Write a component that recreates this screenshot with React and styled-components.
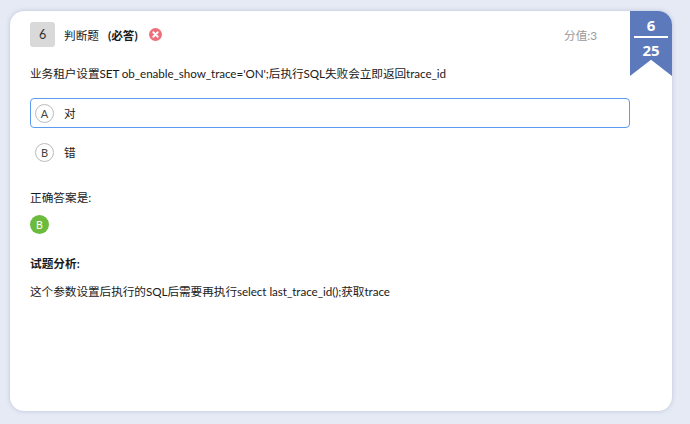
import React from "react";
import styled, { createGlobalStyle } from "styled-components";

const GlobalStyle = createGlobalStyle`
  html, body {
    margin: 0;
    padding: 0;
    background: #e6eaf5;
    font-family: Lato, "Noto Sans CJK SC", sans-serif;
    color: #1a1a1a;
  }
`;

const Page = styled.div`
  box-sizing: border-box;
  width: 690px;
  height: 424px;
  padding: 11px 18px 13px 10px;
`;

const Card = styled.div`
  position: relative;
  box-sizing: border-box;
  height: 400px;
  padding: 10px 42px 0 20px;
  background: #fff;
  border-radius: 14px;
  box-shadow: 0 0 4px rgba(150, 160, 190, 0.55);
  overflow: hidden;
`;

const Header = styled.div`
  display: flex;
  align-items: center;
  height: 26px;
`;

const NumberBox = styled.div`
  display: flex;
  align-items: center;
  justify-content: center;
  width: 25px;
  height: 25px;
  border-radius: 3px;
  background: #d9d9d9;
  font-size: 12.5px;
  color: #333;
`;

const TypeLabel = styled.span`
  margin-left: 9px;
  font-size: 11.67px;
`;

const Required = styled.b`
  margin-left: 9px;
  font-size: 11.67px;
  font-weight: 700;
`;

const WrongIcon = styled.svg`
  margin-left: 11px;
  width: 13px;
  height: 13px;
`;

const Score = styled.span`
  margin-left: auto;
  margin-right: 33px;
  font-size: 11.67px;
  color: #999;
`;

const Question = styled.div`
  margin-top: 17px;
  font-size: 11.67px;
  line-height: 18px;
  letter-spacing: -0.07px;
`;

const Options = styled.div`
  display: flex;
  flex-direction: column;
  gap: 9px;
  margin-top: 16px;
`;

const Option = styled.div`
  display: flex;
  align-items: center;
  box-sizing: border-box;
  height: 30px;
  padding-left: 4px;
  border: 1px solid ${(p) => (p.$active ? "#5b9bf0" : "transparent")};
  border-radius: 4px;
  font-size: 11.67px;
`;

const Letter = styled.span`
  display: flex;
  align-items: center;
  justify-content: center;
  box-sizing: border-box;
  width: 19px;
  height: 19px;
  border: 1px solid #bbb;
  border-radius: 50%;
  font-size: 11px;
  color: #444;
`;

const OptionText = styled.span`
  margin-left: 10px;
  padding-bottom: 2px;
`;

const AnswerLabel = styled.div`
  margin-top: 21px;
  font-size: 11.67px;
  line-height: 18px;
`;

const AnswerBadge = styled.div`
  display: flex;
  align-items: center;
  justify-content: center;
  width: 19px;
  height: 19px;
  margin-top: 9px;
  border-radius: 50%;
  background: #6cbb3c;
  color: #fff;
  font-size: 10.5px;
`;

const AnalysisTitle = styled.div`
  margin-top: 20px;
  font-size: 11.67px;
  line-height: 18px;
  font-weight: 700;
`;

const AnalysisText = styled.div`
  margin-top: 10px;
  font-size: 11.67px;
  line-height: 18px;
  letter-spacing: -0.06px;
`;

const Ribbon = styled.div`
  position: absolute;
  top: 0;
  right: 0;
  box-sizing: border-box;
  width: 42px;
  height: 65px;
  padding-top: 5px;
  background: #5b79bb;
  clip-path: polygon(0 0, 100% 0, 100% 100%, 50% 75%, 0 100%);
  color: #fff;
  font-family: "Open Sans", sans-serif;
  font-size: 15px;
  font-weight: 700;
  text-align: center;
  line-height: 18px;
`;

const RibbonLine = styled.div`
  height: 2px;
  margin: 2px 4px 3px;
  background: #fff;
`;

export default function App() {
  return (
    <Page>
      <GlobalStyle />
      <Card>
        <Header>
          <NumberBox>6</NumberBox>
          <TypeLabel>判断题</TypeLabel>
          <Required>(必答)</Required>
          <WrongIcon viewBox="0 0 14 14">
            <circle cx="7" cy="7" r="7" fill="#ee6f7c" />
            <path d="M4.6 4.6l4.8 4.8M9.4 4.6l-4.8 4.8" stroke="#fff" strokeWidth="2" strokeLinecap="round" />
          </WrongIcon>
          <Score>分值:3</Score>
        </Header>
        <Question>业务租户设置SET ob_enable_show_trace='ON';后执行SQL失败会立即返回trace_id</Question>
        <Options>
          <Option $active>
            <Letter>A</Letter>
            <OptionText>对</OptionText>
          </Option>
          <Option>
            <Letter>B</Letter>
            <OptionText>错</OptionText>
          </Option>
        </Options>
        <AnswerLabel>正确答案是:</AnswerLabel>
        <AnswerBadge>B</AnswerBadge>
        <AnalysisTitle>试题分析:</AnalysisTitle>
        <AnalysisText>这个参数设置后执行的SQL后需要再执行select last_trace_id();获取trace</AnalysisText>
        <Ribbon>
          6
          <RibbonLine />
          25
        </Ribbon>
      </Card>
    </Page>
  );
}
